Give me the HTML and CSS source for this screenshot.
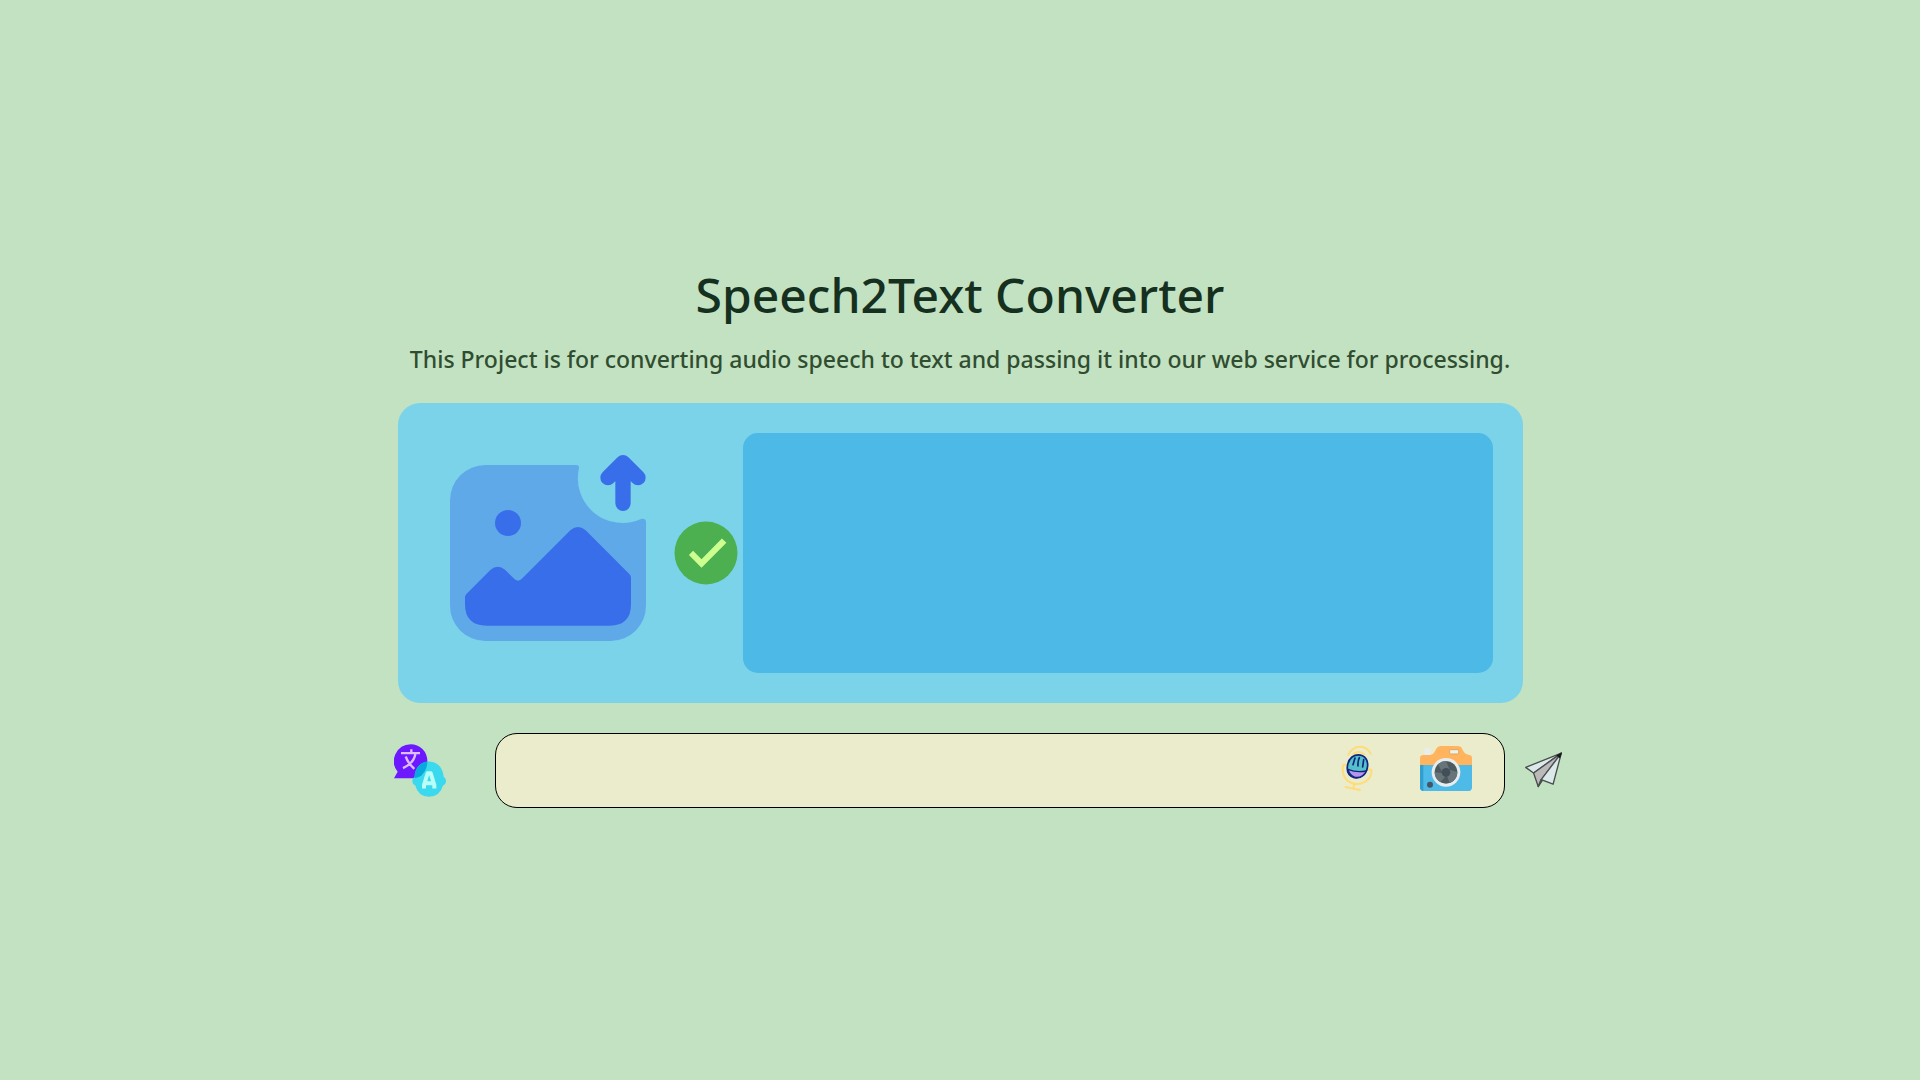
FILE: index.html
```html
<!DOCTYPE html>
<html lang="en">
<head>
<meta charset="utf-8">
<meta name="viewport" content="width=device-width, initial-scale=1">
<title>Speech2Text Converter</title>
<link rel="stylesheet" href="styles.css">
</head>
<body>
<main class="page">
  <h1 class="title">Speech2Text Converter</h1>
  <p class="subtitle">This Project is for converting audio speech to text and passing it into our web service for processing.</p>

  <section class="panel">
    <button class="icon-button" type="button" aria-label="Upload image">
      <svg class="upload-icon" viewBox="114 114 720 720">
        <path fill="#60a9e9" d="M286 210H558Q568 210 567 220A134 134 0 0 0 753 372Q768 368 768 382V632A106 106 0 0 1 662 738H286A106 106 0 0 1 180 632V316A106 106 0 0 1 286 210Z"/>
        <circle fill="#396eea" cx="354" cy="384" r="39"/>
        <path fill="#396eea" d="M225 606Q225 601 230 596L301 525Q323 506 346 525L371 550Q384 564 397 550L541 406Q564 386 587 406L718 537Q723 542 723 548V628Q723 692 659 692H290Q225 692 225 628Z"/>
        <path fill="none" stroke="#396eea" stroke-width="46" stroke-linecap="round" stroke-linejoin="round" d="M699 325V210M654 248L699 203L744 248"/>
      </svg>
    </button>
    <svg class="check-icon" viewBox="0 0 48 48" role="img" aria-label="Ready">
      <circle fill="#4caf50" cx="24" cy="24" r="21"/>
      <path fill="#ccff90" d="M34.6 14.3L21 28.2l-5.6-5.7-2.8 2.8 8.4 8.6 16.6-16.7z"/>
    </svg>
    <output class="result" aria-label="Converted text"></output>
  </section>

  <form class="composer">
    <button class="icon-button" type="button" aria-label="Translate">
      <svg class="translate-icon" viewBox="42 56 156 158">
        <path fill="#6c19ff" d="M92 56A50 50 0 0 1 142 106A50 50 0 0 1 100 158H42L53 139A51 51 0 0 1 92 56Z"/>
        <path fill="#3bd9ee" d="M147 108C171 108 189 126 191 154Q198 158 198 166Q198 177 189 180Q180 213 147 214Q114 213 106 180Q97 177 97 166Q97 158 104 154C104 128 123 108 147 108Z"/>
        <path fill="#08aade" d="M104 158Q102 128 125 113Q133 108 142 108Q142 133 125 149Q116 157 104 158Z"/>
        <path fill="none" stroke="#dfbcff" stroke-width="7" d="M63 83H120M94 71V83M106 86Q101 113 69 128M77 93Q84 113 103 130"/>
        <path fill="none" stroke="#b9fff7" stroke-width="12" stroke-linejoin="round" d="M132 189V179L143 143H152L163 179V189M136 173H160"/>
      </svg>
    </button>
    <div class="field">
      <input class="field-input" type="text" aria-label="Message">
      <button class="icon-button" type="button" aria-label="Record speech">
        <svg class="mic-icon" viewBox="33 22 96 144">
          <g fill="none" stroke="#ffdc78" stroke-width="6" stroke-linecap="round">
            <path d="M55 54Q68 29 91 30Q112 31 122 51M70 52Q87 39 103 53M40 84Q33 112 52 132Q78 151 106 135Q127 121 124 99M40 84H52M124 99L114 98M73 143L70 155M47 151L90 160"/>
          </g>
          <path fill="#55bfca" stroke="#10267d" stroke-width="5" d="M66 61C86 47 114 57 113 87C111 111 95 126 73 123C55 117 49 103 53 84Q56 69 66 61Z"/>
          <path fill="#b694ef" stroke="#10267d" stroke-width="4" d="M54 98Q80 109 109 103Q98 126 75 122Q58 115 54 98Z"/>
          <path fill="none" stroke="#10267d" stroke-width="5" stroke-linecap="round" d="M75 64L69 84M88 63Q83 74 84 88M101 69L98 91"/>
        </svg>
      </button>
      <button class="icon-button" type="button" aria-label="Open camera">
        <svg class="camera-icon" viewBox="30 30 156 135">
          <path fill="#e8edee" d="M43 60V41Q44 36 52 37H61V60Z"/>
          <path fill="#ffb45d" d="M30 87V65Q31 57 40 57H62Q69 57 73 49L79 38Q83 31 92 30H143Q153 30 157 40L162 49Q166 56 178 57Q186 58 186 66V87Z"/>
          <path fill="#4ebae7" d="M30 87H186V155Q185 164 177 165H40Q31 164 30 155Z"/>
          <path fill="#319ed0" d="M30 87H40V165Q31 164 30 155Z"/>
          <rect fill="#f0f0eb" stroke="#dda665" stroke-width="3" x="119" y="41" width="27" height="13" rx="2"/>
          <circle fill="#e7edef" cx="108" cy="109" r="43"/>
          <circle fill="#4c595f" cx="108" cy="109" r="34"/>
          <path fill="#67757a" d="M108 75L119 101L142 108A34 34 0 0 1 119 141L110 118L91 138A34 34 0 0 1 74 109L98 111L84 85A34 34 0 0 1 108 75Z"/>
          <circle fill="#434f58" cx="108" cy="109" r="13"/>
          <circle fill="#465561" cx="60" cy="146" r="9"/>
        </svg>
      </button>
    </div>
    <button class="icon-button" type="submit" aria-label="Send">
      <svg class="send-icon" viewBox="134 94 112 108">
        <g stroke="#484d4d" stroke-width="4" stroke-linejoin="round">
          <path fill="#dce9eb" d="M244 97L136 140L160 157Z"/>
          <path fill="#bcb9bb" d="M244 97L160 157L174 198L183 178Z"/>
          <path fill="#dce9eb" d="M244 97L183 177L219 191Z"/>
          <path fill="#bcb9bb" d="M174 198L186 180L183 177Z"/>
        </g>
        <path fill="#171919" d="M246 95L229 103L240 113Z"/>
      </svg>
    </button>
  </form>
</main>
</body>
</html>
```
FILE: styles.css
```css
* {
  box-sizing: border-box;
}

body {
  margin: 0;
  background: #c3e2c2;
  font-family: "Noto Sans", "Open Sans", sans-serif;
}

.page {
  display: flex;
  flex-direction: column;
  align-items: center;
  justify-content: center;
  min-height: 100vh;
  padding-bottom: 14px;
}

.title {
  margin: 0;
  color: #163020;
  font-size: 48px;
  font-weight: 500;
  line-height: 72px;
}

.subtitle {
  margin: 8px 0 24px;
  color: #304d30;
  font-size: 23px;
  font-weight: 500;
  line-height: 40px;
}

.panel {
  display: flex;
  align-items: center;
  width: 100%;
  max-width: 1125px;
  padding: 30px;
  border-radius: 22px;
  background: #7bd3ea;
}

.icon-button {
  display: flex;
  flex: none;
  padding: 0;
  border: 0;
  background: none;
  cursor: pointer;
}

.upload-icon {
  width: 240px;
  height: 240px;
}

.check-icon {
  flex: none;
  width: 72px;
  height: 72px;
  margin: 0 1px 0 2px;
}

.result {
  flex: 1;
  align-self: stretch;
  border-radius: 15px;
  background: #4cb9e7;
}

.composer {
  display: flex;
  align-items: center;
  width: 100%;
  max-width: 1204px;
  margin-top: 30px;
  padding-left: 36px;
}

.translate-icon {
  width: 52px;
  height: 53px;
}

.field {
  display: flex;
  flex: 1;
  align-items: center;
  margin: 0 20px 0 49px;
  padding: 8px 32px 12px 24px;
  border: 1px solid #000;
  border-radius: 22px;
  background: #eaeccc;
}

.field-input {
  flex: 1;
  min-width: 0;
  height: 53px;
  padding: 0;
  border: 0;
  outline: 0;
  background: transparent;
  color: #163020;
  font: inherit;
  font-size: 23px;
}

.mic-icon {
  width: 32px;
  height: 48px;
  margin-right: 47px;
}

.camera-icon {
  width: 52px;
  height: 45px;
}

.send-icon {
  width: 37px;
  height: 36px;
}
```
